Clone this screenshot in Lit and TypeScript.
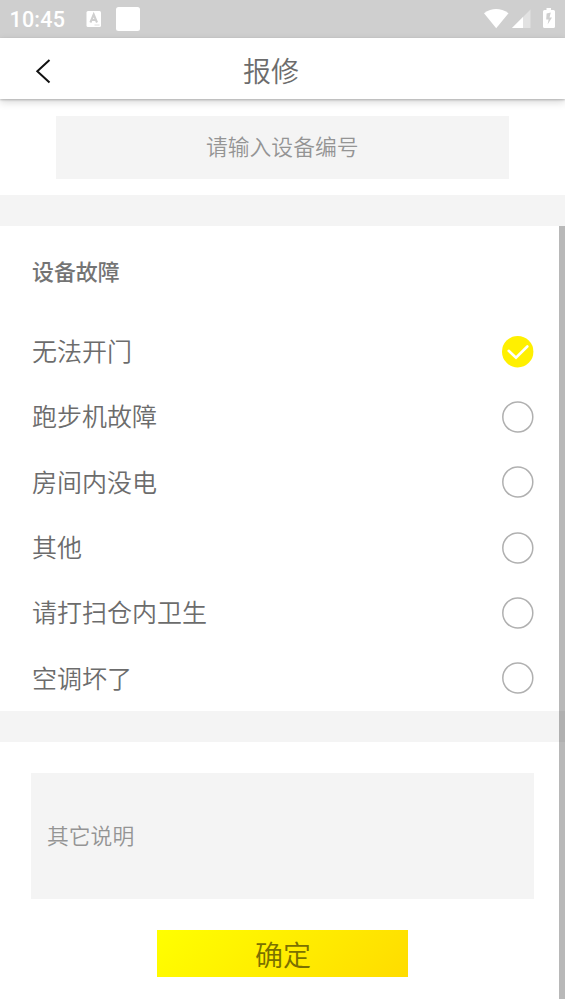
import { LitElement, html, css, svg } from "lit";
import { customElement, property, state } from "lit/decorators.js";

@customElement("status-bar")
class StatusBar extends LitElement {
  static styles = css`
    :host {
      display: flex;
      align-items: center;
      height: 38px;
      box-sizing: border-box;
      padding-left: 9.5px;
      background: #cfcfcf;
      color: #fff;
      font: 500 21.5px/38px Roboto, sans-serif;
    }
    .time { width: 76.5px; white-space: nowrap; letter-spacing: 0.2px; padding-top: 1px; box-sizing: border-box; height: 38px; }
    .spacer { flex: 1; }
    svg { display: block; flex: none; }
  `;
  render() {
    return html`
      <span class="time">10:45</span>
      <svg width="60" height="38" viewBox="86 0 60 38">
        <rect x="86.5" y="11" width="14.5" height="16" rx="1.5" fill="#fff" />
        <path d="M90.4 22.5L93.7 14.5L97 22.5M91.5 20H96" fill="none" stroke="#cfcfcf" stroke-width="2.1" />
        <path d="M94.5 25H99.5" stroke="#dedede" stroke-width="1" />
        <rect x="116" y="7" width="24" height="24" rx="2.5" fill="#fff" />
      </svg>
      <span class="spacer"></span>
      <svg width="85" height="38" viewBox="480 0 85 38">
        <path d="M484 13.2Q496 4.8 508.5 13.2L496.2 28.3Z" fill="#fff" />
        <path d="M530.5 9.5V28H512Z" fill="#e2e2e2" />
        <path d="M523 17V28H512Z" fill="#fff" />
        <path d="M546.5 8H551V10H553.5Q555 10 555 11.5V26.5Q555 28 553.5 28H544.5Q543 28 543 26.5V11.5Q543 10 544.5 10H546.5Z" fill="#fff" />
        <path d="M550.8 12.6L546.6 13.6L546.2 19.6H548.6L547.6 24.6L552 17.6H549.5Z" fill="#cfcfcf" />
      </svg>
    `;
  }
}

@customElement("fault-option")
class FaultOption extends LitElement {
  @property() label = "";
  @property({ type: Boolean }) checked = false;
  static styles = css`
    :host {
      display: flex;
      align-items: center;
      justify-content: space-between;
      font-size: 25px;
      line-height: 36px;
      cursor: pointer;
    }
    span { padding-bottom: 3px; }
    svg { display: block; }
  `;
  render() {
    return html`
      <span>${this.label}</span>
      <svg width="32" height="32" viewBox="0 0 32 32">
        ${this.checked
          ? svg`<circle cx="15.7" cy="15.7" r="15.7" fill="#fff000" />
              <path d="M6.7 14.8L14 21.7L25.3 10.5" fill="none" stroke="#fff" stroke-width="2.6" stroke-linecap="round" />`
          : svg`<circle cx="15.8" cy="16" r="15" fill="none" stroke="#b0b0b0" stroke-width="1.5" />`}
      </svg>
    `;
  }
}

@customElement("app-root")
class AppRoot extends LitElement {
  @state() private selected = 0;
  private faults = ["无法开门", "跑步机故障", "房间内没电", "其他", "请打扫仓内卫生", "空调坏了"];

  static styles = css`
    :host {
      display: flex;
      flex-direction: column;
      position: relative;
      height: 1004px;
      overflow: hidden;
      background: #fff;
      color: #6c6c6c;
      font-family: "Noto Sans CJK SC", sans-serif;
      font-weight: 350;
    }
    .header {
      flex: none;
      display: grid;
      grid-template-columns: 60px 1fr 83px;
      align-items: center;
      height: 61px;
      box-shadow: 0 1px 2px rgba(0, 0, 0, 0.22), 0 3px 8px rgba(0, 0, 0, 0.16);
    }
    .header svg { display: block; }
    .title { font-size: 28px; line-height: 40px; text-align: center; padding-top: 3px; }
    .device {
      flex: none;
      display: flex;
      align-items: center;
      justify-content: center;
      height: 63px;
      margin: 17px 56.5px 16px 56px;
      padding-bottom: 4px;
      box-sizing: border-box;
      background: #f4f4f4;
      color: #949494;
      font-size: 21.8px;
    }
    .band { flex: none; height: 31px; background: #f4f4f4; }
    .faults {
      flex: none;
      height: 485px;
      box-sizing: border-box;
      padding: 0 31px 0 32px;
      display: grid;
      grid-template-rows: 93px repeat(6, 1fr);
    }
    .caption { font-size: 21.9px; font-weight: 500; color: #747474; align-self: center; padding-bottom: 4px; }
    .note {
      flex: none;
      display: flex;
      align-items: center;
      height: 126px;
      margin: 31px 31px;
      padding: 0 0 3px 16px;
      box-sizing: border-box;
      background: #f4f4f4;
      color: #949494;
      font-size: 21.8px;
    }
    .submit {
      flex: none;
      width: 251px;
      height: 47px;
      margin-left: 157px;
      padding: 2px 0 0 1px;
      border: 0;
      background: linear-gradient(135deg, #ffff00, #ffdc00);
      color: #7a7000;
      font: 350 28px/45px "Noto Sans CJK SC", sans-serif;
    }
    .scrollbar {
      position: absolute;
      right: 0;
      top: 226px;
      width: 6px;
      height: 773px;
      background: rgba(0, 0, 0, 0.28);
    }
  `;

  render() {
    return html`
      <status-bar></status-bar>
      <div class="header">
        <svg width="60" height="61" viewBox="0 38 60 61">
          <path d="M49.5 60L37.3 71.3L49.5 82.5" fill="none" stroke="#111" stroke-width="2" />
        </svg>
        <div class="title">报修</div>
      </div>
      <div class="device">请输入设备编号</div>
      <div class="band"></div>
      <div class="faults">
        <div class="caption">设备故障</div>
        ${this.faults.map(
          (f, i) => html`<fault-option .label=${f} .checked=${i === this.selected} @click=${() => (this.selected = i)}></fault-option>`
        )}
      </div>
      <div class="band"></div>
      <div class="note">其它说明</div>
      <button class="submit">确定</button>
      <div class="scrollbar"></div>
    `;
  }
}
